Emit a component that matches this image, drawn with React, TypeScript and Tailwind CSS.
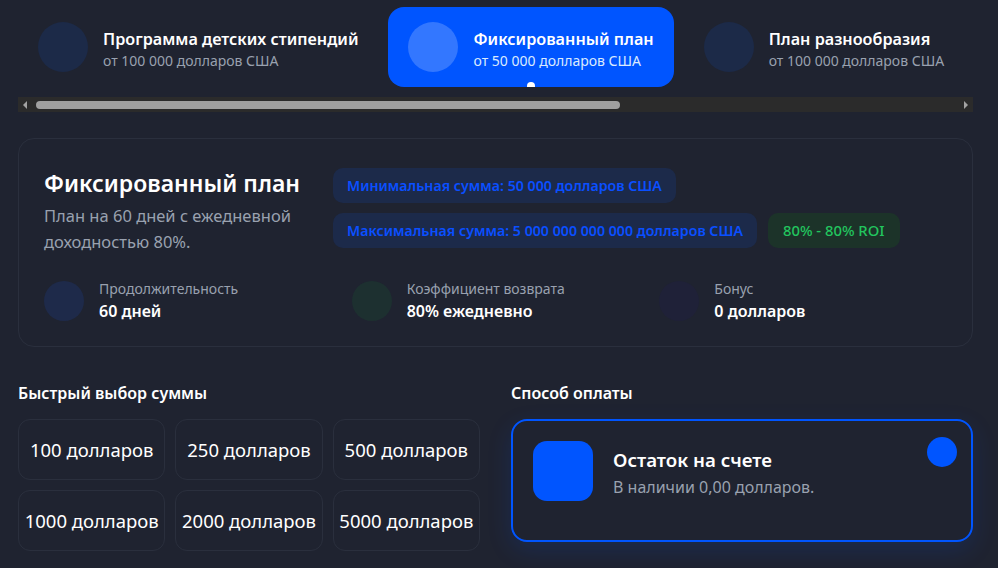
import React from "react";

const plans = [
  { title: "Программа детских стипендий", sub: "от 100 000 долларов США", active: false },
  { title: "Фиксированный план", sub: "от 50 000 долларов США", active: true },
  { title: "План разнообразия", sub: "от 100 000 долларов США", active: false },
];

const amounts = ["100 долларов", "250 долларов", "500 долларов", "1000 долларов", "2000 долларов", "5000 долларов"];

const stats = [
  { label: "Продолжительность", value: "60 дней", dot: "bg-[#1e2a4a]" },
  { label: "Коэффициент возврата", value: "80% ежедневно", dot: "bg-[#1d3030]" },
  { label: "Бонус", value: "0 долларов", dot: "bg-[#1f2138]" },
];

export default function App() {
  return (
    <div
      className="min-h-screen w-full bg-[#1f2330] text-white overflow-hidden"
      style={{ fontFamily: '"Noto Sans", "Open Sans", sans-serif' }}
    >
      <div className="w-[955px] ml-[18px]">
        {/* Plan tabs */}
        <div className="pt-[7px]">
          <div className="relative flex gap-2.5 overflow-hidden">
            {plans.map((p) => (
              <div
                key={p.title}
                className={
                  "relative flex items-center shrink-0 h-20 px-5 rounded-2xl " +
                  (p.active ? "bg-[#0055ff]" : "")
                }
              >
                <div
                  className={
                    "w-[50px] h-[50px] rounded-full shrink-0 " +
                    (p.active ? "bg-white/20" : "bg-[#1c2a48]")
                  }
                />
                <div className="ml-[15px] mt-[4px] whitespace-nowrap">
                  <div className="text-[16.2px] font-semibold leading-[23px] text-white">{p.title}</div>
                  <div className={"text-[14px] leading-[20px] " + (p.active ? "text-blue-100" : "text-gray-400")}>
                    {p.sub}
                  </div>
                </div>
                {p.active && (
                  <div className="absolute left-1/2 -bottom-[3px] -translate-x-1/2 w-2 h-2 rounded-full bg-white" />
                )}
              </div>
            ))}
          </div>

          {/* scrollbar */}
          <div className="mt-[10px] h-[15px] bg-[#2b2b2b] flex items-center">
            <div className="w-[14px] flex justify-center">
              <div className="w-0 h-0 border-y-[4px] border-y-transparent border-r-[4px] border-r-[#a3a3a3]" />
            </div>
            <div className="flex-1 h-full flex items-center">
              <div className="ml-[4px] w-[584px] h-2 rounded-full bg-[#a0a0a0]" />
            </div>
            <div className="w-[14px] flex justify-center">
              <div className="w-0 h-0 border-y-[4px] border-y-transparent border-l-[4px] border-l-[#a3a3a3]" />
            </div>
          </div>
        </div>

        {/* Plan details */}
        <div className="mt-[26px] rounded-2xl border border-[#2a2f3d] px-[25px] pt-[30px] pb-[23px]">
          <div className="flex">
            <div className="w-[289px] shrink-0">
              <h2 className="text-[23px] font-semibold leading-[28px]">Фиксированный план</h2>
              <p className="mt-[6px] text-[16.5px] leading-[26px] text-gray-400 pr-3">
                План на 60 дней с ежедневной доходностью 80%.
              </p>
            </div>
            <div className="flex flex-col gap-[10px] -mt-[1px]">
              <div className="flex">
                <span className="h-[35px] flex items-center px-[14px] rounded-[10px] bg-[#1c2a4a] text-[#0a4fff] text-[14.2px] font-semibold whitespace-nowrap">
                  Минимальная сумма: 50 000 долларов США
                </span>
              </div>
              <div className="flex gap-[11px]">
                <span className="h-[35px] flex items-center px-[14px] rounded-[10px] bg-[#1c2a4a] text-[#0a4fff] text-[14.2px] font-semibold whitespace-nowrap">
                  Максимальная сумма: 5 000 000 000 000 долларов США
                </span>
                <span className="h-[35px] flex items-center px-[15px] rounded-[10px] bg-[#1c3329] text-[#22c55e] text-[14.8px] font-medium whitespace-nowrap">
                  80% - 80% ROI
                </span>
              </div>
            </div>
          </div>

          <div className="mt-[24px] grid grid-cols-3 gap-5">
            {stats.map((s) => (
              <div key={s.label} className="flex items-center">
                <div className={"w-10 h-10 rounded-full shrink-0 " + s.dot} />
                <div className="ml-[15px]">
                  <div className="text-[14px] leading-[20px] text-gray-400">{s.label}</div>
                  <div className="text-[16px] leading-[24px] font-semibold">{s.value}</div>
                </div>
              </div>
            ))}
          </div>
        </div>

        {/* Bottom */}
        <div className="mt-[35px] grid grid-cols-2 gap-[31px]">
          <div>
            <h3 className="text-[16px] font-semibold leading-[22px]">Быстрый выбор суммы</h3>
            <div className="mt-[15px] grid grid-cols-3 gap-[10px]">
              {amounts.map((a) => (
                <button
                  key={a}
                  className="h-[61px] rounded-xl border border-[#2a2f3d] text-[18.5px] text-white whitespace-nowrap flex items-center justify-center"
                >
                  {a}
                </button>
              ))}
            </div>
          </div>
          <div>
            <h3 className="text-[16px] font-semibold leading-[22px]">Способ оплаты</h3>
            <div className="relative mt-[15px] h-[123px] rounded-2xl border-2 border-[#0055ff] p-5 flex items-start shadow-[0_8px_24px_rgba(0,85,255,0.15)]">
              <div className="w-[60px] h-[60px] rounded-[14px] bg-[#0055ff] shrink-0" />
              <div className="ml-5 mt-[7px]">
                <div className="text-[18.7px] font-semibold leading-[24px]">Остаток на счете</div>
                <div className="mt-[4px] text-[16px] leading-[22px] text-gray-400">В наличии 0,00 долларов.</div>
              </div>
              <div className="absolute top-4 right-[14px] w-[30px] h-[30px] rounded-full bg-[#0055ff]" />
            </div>
          </div>
        </div>
      </div>
    </div>
  );
}
